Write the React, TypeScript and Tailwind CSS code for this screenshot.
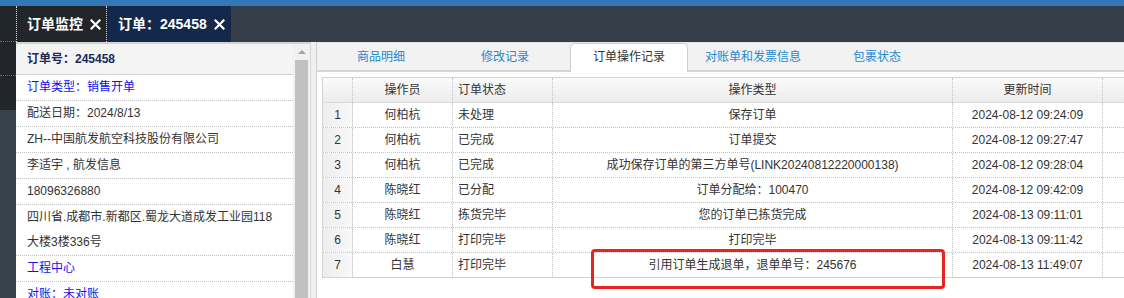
import React from "react";

const rows = [
  ["1", "何柏杭", "未处理", "保存订单", "2024-08-12 09:24:09"],
  ["2", "何柏杭", "已完成", "订单提交", "2024-08-12 09:27:47"],
  ["3", "何柏杭", "已完成", "成功保存订单的第三方单号(LINK20240812220000138)", "2024-08-12 09:28:04"],
  ["4", "陈晓红", "已分配", "订单分配给：100470", "2024-08-12 09:42:09"],
  ["5", "陈晓红", "拣货完毕", "您的订单已拣货完成", "2024-08-13 09:11:01"],
  ["6", "陈晓红", "打印完毕", "打印完毕", "2024-08-13 09:11:42"],
  ["7", "白慧", "打印完毕", "引用订单生成退单，退单单号：245676", "2024-08-13 11:49:07"],
];

const tabs = ["商品明细", "修改记录", "订单操作记录", "对账单和发票信息", "包裹状态"];

function CloseX() {
  return (
    <svg width="11" height="11" viewBox="0 0 11 11" className="shrink-0">
      <path d="M1.5 1.5 L9.5 9.5 M9.5 1.5 L1.5 9.5" stroke="white" strokeWidth="2.2" strokeLinecap="square" />
    </svg>
  );
}

function InfoRow({ children, blue, last }: { children: React.ReactNode; blue?: boolean; last?: boolean }) {
  return (
    <div
      className={`px-[11px] leading-[25px] ${last ? "" : "border-b border-dotted border-[#c4c4c4]"} ${
        blue ? "text-[#1010f0]" : "text-[#333]"
      }`}
    >
      {children}
    </div>
  );
}

export default function App() {
  return (
    <div className="w-[1124px] h-[298px] overflow-hidden bg-[#363f49] font-['Liberation_Sans','Noto_Sans_CJK_SC',sans-serif] text-[12px]">
      <div className="h-[6px] bg-[#3479b7]" />
      <div className="flex h-[36px] text-[14px] font-bold text-white">
        <div className="w-[16px] bg-[#22262b] border-b border-dotted border-[#6b7078]" />
        <div className="flex w-[91px] items-center gap-[7px] border-x border-dotted border-[#d8d8d8] bg-[#22262b] pl-[10px]">
          <span>订单监控</span>
          <CloseX />
        </div>
        <div className="flex w-[124px] items-center justify-between bg-[#13284a] pl-[11px] pr-[6px]">
          <span>订单：245458</span>
          <CloseX />
        </div>
      </div>

      <div className="flex h-[256px]">
        <div className="flex w-[16px] flex-col">
          <div className="h-[34px] border-b border-dotted border-[#6b7078] bg-[#22262b]" />
          <div className="h-[34px] bg-[#22262b]" />
          <div className="flex-1 bg-[#37414b]" />
        </div>

        <div className="w-[277px] border-t-2 border-[#d4d4d4] bg-white">
          <div className="h-[31px] border-b border-[#d0d0d0] bg-[#f4f4f4] px-[11px] font-bold leading-[30px] text-[#1c2a58]">
            订单号：245458
          </div>
          <InfoRow blue>订单类型：销售开单</InfoRow>
          <InfoRow>配送日期：2024/8/13</InfoRow>
          <InfoRow>ZH--中国航发航空科技股份有限公司</InfoRow>
          <InfoRow>李适宇 , 航发信息</InfoRow>
          <InfoRow>18096326880</InfoRow>
          <InfoRow>四川省.成都市.新都区.蜀龙大道成发工业园118大楼3楼336号</InfoRow>
          <InfoRow blue>工程中心</InfoRow>
          <InfoRow blue last>
            对账：未对账
          </InfoRow>
        </div>

        <div className="flex w-[17px] flex-col border-t-2 border-[#d4d4d4] bg-[#f1f1f1]">
          <div className="flex h-[16px] items-center justify-center">
            <div className="h-0 w-0 border-x-[4px] border-b-[4px] border-x-transparent border-b-[#a3a3a3]" />
          </div>
          <div className="mx-[2px] flex-1 bg-[#c1c1c1]" />
        </div>

        <div className="w-[6px] border-l border-[#d8d8d8] bg-[#f0f0f0]" />

        <div className="relative flex-1 border-l border-[#d0d0d0] bg-white">
          <div className="flex h-[30px] items-end gap-[6px] border-t border-b-2 border-[#d6d6d6] border-t-[#e6e6e6] bg-[#f2f2f2] pl-[5px]">
            {tabs.map((t, i) =>
              i === 2 ? (
                <div
                  key={t}
                  className="-mb-[2px] flex h-[29px] w-[118px] items-center justify-center rounded-t-[5px] border border-b-0 border-[#cfcfcf] bg-white pb-[2px] text-[#333]"
                >
                  {t}
                </div>
              ) : (
                <div key={t} className="flex h-[27px] w-[118px] items-center justify-center text-[#1f88d0]">
                  {t}
                </div>
              )
            )}
          </div>

          <div className="ml-[5px] mt-[5px] border-l border-t border-[#d3d3d3] text-[#333]">
            <div className="flex h-[25px] border-b border-[#d9d9d9] bg-linear-to-b from-[#fbfbfb] to-[#ececec]">
              <div className="w-[30px] border-r border-dotted border-[#c4c4c4]" />
              <div className="flex w-[100px] items-center justify-center border-r border-dotted border-[#c4c4c4]">操作员</div>
              <div className="flex w-[100px] items-center border-r border-dotted border-[#c4c4c4] pl-[5px]">订单状态</div>
              <div className="flex w-[400px] items-center justify-center border-r border-dotted border-[#c4c4c4]">操作类型</div>
              <div className="flex w-[150px] items-center justify-center border-r border-dotted border-[#c4c4c4]">更新时间</div>
              <div className="flex-1" />
            </div>
            {rows.map((r, i) => (
              <div
                key={r[0]}
                className={`flex h-[25px] border-b ${
                  i === rows.length - 1 ? "border-solid border-[#d3d3d3]" : "border-dotted border-[#c4c4c4]"
                }`}
              >
                <div className="flex w-[30px] items-center justify-center border-r border-dotted border-[#c4c4c4] bg-linear-to-r from-[#ededed] to-[#f9f9f9]">
                  {r[0]}
                </div>
                <div className="flex w-[100px] items-center justify-center border-r border-dotted border-[#c4c4c4]">{r[1]}</div>
                <div className="flex w-[100px] items-center border-r border-dotted border-[#c4c4c4] pl-[5px]">{r[2]}</div>
                <div className="flex w-[400px] items-center justify-center whitespace-nowrap border-r border-dotted border-[#c4c4c4]">{r[3]}</div>
                <div className="flex w-[150px] items-center justify-center border-r border-dotted border-[#c4c4c4]">{r[4]}</div>
                <div className="flex-1" />
              </div>
            ))}
          </div>

          <div className="absolute left-[274px] top-[207px] h-[40px] w-[354px] rounded-[4px] border-[3px] border-[#e8241e]" />
        </div>
      </div>
    </div>
  );
}
